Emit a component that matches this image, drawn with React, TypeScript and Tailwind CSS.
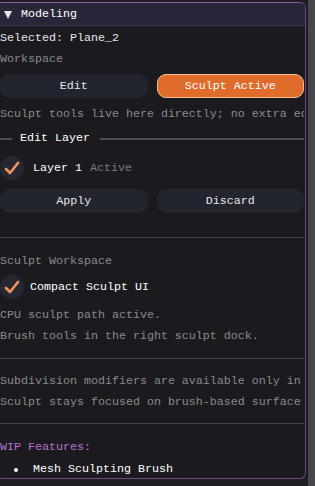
import React from "react";

function Check() {
  return (
    <div className="w-[24px] h-[24px] rounded-full bg-[#252733] flex items-center justify-center shrink-0">
      <svg width="16" height="14" viewBox="0 0 16 14">
        <path
          d="M2 8 L6 12 L14 2"
          fill="none"
          stroke="#f2935c"
          strokeWidth="2.6"
          strokeLinecap="round"
          strokeLinejoin="round"
        />
      </svg>
    </div>
  );
}

function Line({ children, className = "" }: { children: React.ReactNode; className?: string }) {
  return <div className={"h-[13px] leading-[13px] whitespace-nowrap " + className}>{children}</div>;
}

function Sep({ className = "" }: { className?: string }) {
  return <div className={"h-px bg-[#43434b] shrink-0 " + className} />;
}

export default function App() {
  return (
    <div
      className="w-[315px] h-[486px] bg-[#202024] flex overflow-hidden text-[11.67px] text-[#e6e6e6]"
      style={{ fontFamily: '"Liberation Mono", "DejaVu Sans Mono", monospace' }}
    >
      <div className="w-[310px] h-[477px] mt-[2px] -ml-[4px] shrink-0 border border-[#6a4684] border-t-[#8a5aa6] rounded-[6px] bg-[#1b1b1f] flex flex-col overflow-hidden">
        {/* title bar */}
        <div className="h-[23px] shrink-0 bg-[#28273a] border-b border-[#45304f] flex items-center pl-[7px] pt-[1px]">
          <svg width="8" height="8" viewBox="0 0 8 8" className="mr-[9px]">
            <path d="M0 0 H8 L4 8 Z" fill="#e6e6e6" />
          </svg>
          <span className="text-white">Modeling</span>
        </div>

        <div className="flex flex-col pl-[3px] pr-[1px]">
          <Line className="mt-[6px]">Selected: Plane_2</Line>
          <Line className="mt-[8px] text-[#8a8a8e]">Workspace</Line>

          <div className="mt-[8px] grid grid-cols-2 gap-[9px] h-[24px]">
            <div className="rounded-[9px] bg-[#22252d] flex items-center justify-center pt-[1px]">Edit</div>
            <div className="rounded-[9px] bg-[#e06c2c] border border-[#f4bf93] flex items-center justify-center text-white pt-[1px]">
              Sculpt Active
            </div>
          </div>

          <Line className="mt-[10px] text-[#8a8a8e] overflow-hidden">
            Sculpt tools live here directly; no extra ed
          </Line>

          <div className="mt-[11px] h-[13px] flex items-center">
            <div className="w-[12px] h-[2px] bg-[#4c4c55]" />
            <span className="ml-[8px] leading-[13px] text-white">Edit Layer</span>
            <div className="flex-1 h-[2px] bg-[#4c4c55] ml-[10px]" />
          </div>

          <div className="mt-[11px] h-[24px] flex items-center">
            <Check />
            <span className="ml-[9px] text-white pt-[2px]">Layer 1</span>
            <span className="ml-[8px] text-[#7c7c80] pt-[2px]">Active</span>
          </div>

          <div className="mt-[9px] grid grid-cols-2 gap-[9px] h-[24px]">
            <div className="rounded-[9px] bg-[#22252d] flex items-center justify-center pt-[2px]">Apply</div>
            <div className="rounded-[9px] bg-[#22252d] flex items-center justify-center pt-[2px]">Discard</div>
          </div>

          <Sep className="mt-[24px] -ml-[3px]" />

          <Line className="mt-[17px] text-[#8a8a8e]">Sculpt Workspace</Line>

          <div className="mt-[7px] h-[24px] flex items-center">
            <Check />
            <span className="ml-[6px] text-white pt-[2px]">Compact Sculpt UI</span>
          </div>

          <Line className="mt-[10px] text-[#8a8a8e]">CPU sculpt path active.</Line>
          <Line className="mt-[8px] text-[#8a8a8e]">Brush tools in the right sculpt dock.</Line>

          <Sep className="mt-[15px] -ml-[3px]" />

          <Line className="mt-[16px] text-[#8a8a8e] overflow-hidden">
            Subdivision modifiers are available only in E
          </Line>
          <Line className="mt-[8px] text-[#8a8a8e] overflow-hidden">
            Sculpt stays focused on brush-based surface w
          </Line>

          <Sep className="mt-[14px] -ml-[3px]" />

          <Line className="mt-[17px] text-[#b872d0]">WIP Features:</Line>
          <div className="mt-[9px] h-[13px] flex items-center">
            <div className="w-[4px] h-[4px] rounded-full bg-white ml-[14px]" />
            <span className="ml-[15px] leading-[13px] text-white">Mesh Sculpting Brush</span>
          </div>
        </div>
      </div>
      <div className="w-[2px] shrink-0 bg-[#1e1e22]" />
      <div className="flex-1 bg-[#46464b]" />
    </div>
  );
}
